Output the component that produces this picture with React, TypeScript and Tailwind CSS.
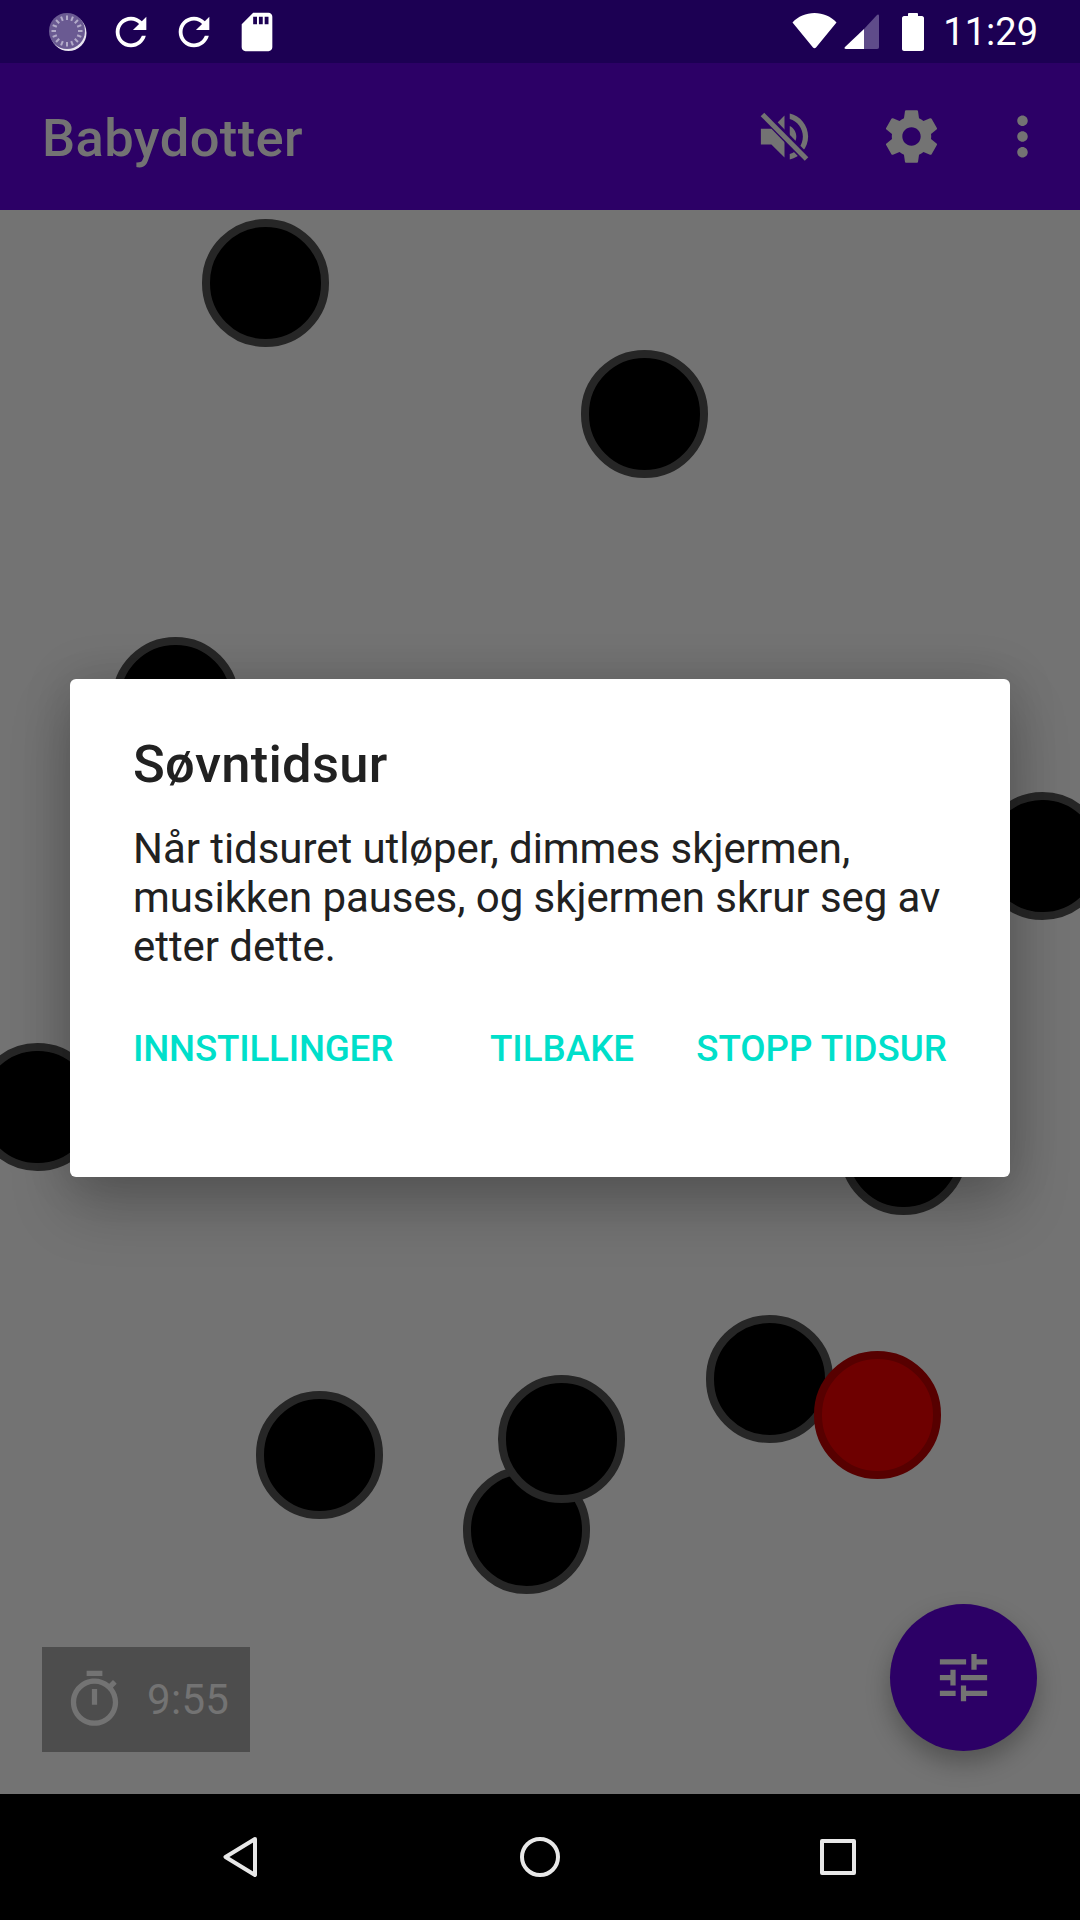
const dots = [
  "left-[202px] top-[9px]",
  "left-[581px] top-[140px]",
  "left-[112px] top-[427px]",
  "left-[979px] top-[582px]",
  "left-[-26px] top-[833px]",
  "left-[840px] top-[877px]",
  "left-[706px] top-[1105px]",
  "left-[256px] top-[1181px]",
  "left-[463px] top-[1256px]",
  "left-[498px] top-[1165px]",
];

function Icon({ d, size, className }: { d: string; size: number; className?: string }) {
  return (
    <svg width={size} height={size} viewBox="0 0 24 24" fill="currentColor" className={className}>
      <path d={d} />
    </svg>
  );
}

const REFRESH =
  "M17.65 6.35C16.2 4.9 14.21 4 12 4c-4.42 0-7.99 3.58-7.99 8s3.57 8 7.99 8c3.73 0 6.84-2.55 7.73-6h-2.08c-.82 2.33-3.04 4-5.65 4-3.31 0-6-2.69-6-6s2.69-6 6-6c1.66 0 3.14.69 4.22 1.78L13 11h7V4l-2.35 2.35z";
const SD =
  "M18 2h-8L4.02 8 4 20c0 1.1.9 2 2 2h12c1.1 0 2-.9 2-2V4c0-1.1-.9-2-2-2zm-6 6h-2V4h2v4zm3 0h-2V4h2v4zm3 0h-2V4h2v4z";
const GEAR =
  "M19.43 12.98c.04-.32.07-.64.07-.98s-.03-.66-.07-.98l2.11-1.65c.19-.15.24-.42.12-.64l-2-3.46c-.12-.22-.39-.3-.61-.22l-2.49 1c-.52-.4-1.08-.73-1.69-.98l-.38-2.65C14.46 2.18 14.25 2 14 2h-4c-.25 0-.46.18-.49.42l-.38 2.65c-.61.25-1.17.59-1.69.98l-2.49-1c-.23-.09-.49 0-.61.22l-2 3.46c-.13.22-.07.49.12.64l2.11 1.65c-.04.32-.07.65-.07.98s.03.66.07.98l-2.11 1.65c-.19.15-.24.42-.12.64l2 3.46c.12.22.39.3.61.22l2.49-1c.52.4 1.08.73 1.69.98l.38 2.65c.03.24.24.42.49.42h4c.25 0 .46-.18.49-.42l.38-2.65c.61-.25 1.17-.59 1.69-.98l2.49 1c.23.09.49 0 .61-.22l2-3.46c.12-.22.07-.49-.12-.64l-2.11-1.65zM12 15.5c-1.93 0-3.5-1.57-3.5-3.5s1.57-3.5 3.5-3.5 3.5 1.57 3.5 3.5-1.57 3.5-3.5 3.5z";
const MORE =
  "M12 8c1.1 0 2-.9 2-2s-.9-2-2-2-2 .9-2 2 .9 2 2 2zm0 2c-1.1 0-2 .9-2 2s.9 2 2 2 2-.9 2-2-.9-2-2-2zm0 6c-1.1 0-2 .9-2 2s.9 2 2 2 2-.9 2-2-.9-2-2-2z";
const TUNE =
  "M3 17v2h6v-2H3zM3 5v2h10V5H3zm10 16v-2h8v-2h-8v-2h-2v6h2zM7 9v2H3v2h4v2h2V9H7zm14 4v-2H11v2h10zm-6-4h2V7h4V5h-4V3h-2v6z";
const TIMER =
  "M15 1H9v2h6V1zm-4 13h2V8h-2v6zm8.03-6.61l1.42-1.42c-.43-.51-.9-.99-1.41-1.41l-1.42 1.42C16.07 4.74 14.12 4 12 4c-4.97 0-9 4.03-9 9s4.02 9 9 9 9-4.03 9-9c0-2.12-.74-4.07-1.97-5.61zM12 20c-3.87 0-7-3.13-7-7s3.13-7 7-7 7 3.13 7 7-3.13 7-7 7z";
const VOLUME =
  "M3 9v6h4l5 5V4L7 9H3zm13.5 3c0-1.77-1.02-3.29-2.5-4.03v8.05c1.48-.73 2.5-2.25 2.5-4.02zM14 3.23v2.06c2.89.86 5 3.54 5 6.71s-2.11 5.85-5 6.71v2.06c4.01-.91 7-4.49 7-8.77s-2.99-7.86-7-8.77z";

function Spinner() {
  const ticks = Array.from({ length: 16 }, (_, i) => (i * 360) / 16);
  return (
    <svg width="46" height="46" viewBox="0 0 46 46">
      <circle cx="23.5" cy="24" r="18" fill="#e8e4f0" />
      <circle cx="22" cy="22" r="18" fill="#6a5a92" />
      {ticks.map((a) => (
        <line
          key={a}
          x1="22"
          y1="6.5"
          x2="22"
          y2="11"
          stroke="#b3abc9"
          strokeWidth="2"
          transform={`rotate(${a} 22 22)`}
        />
      ))}
    </svg>
  );
}

function StatusBar() {
  return (
    <div className="flex h-[63px] items-center justify-between bg-[#1c0053] pl-[45px] pr-[42px] text-white">
      <div className="flex items-center gap-[17px]">
        <Spinner />
        <Icon d={REFRESH} size={46} />
        <Icon d={REFRESH} size={46} />
        <Icon d={SD} size={46} />
      </div>
      <div className="flex items-center">
        <svg width="45" height="36" viewBox="0 0 45 36" className="mt-[-1px]">
          <path d="M0.5 9.5C6 3.5 14 0 22.5 0S39 3.5 44.5 9.5L24 34.5c-.8 1-2.2 1-3 0z" fill="#fff" />
        </svg>
        <svg width="35" height="35" viewBox="0 0 35 35" className="ml-[7px]">
          <path d="M20 15L33 1c1-1 2-.5 2 1v31c0 1-.5 2-2 2H20z" fill="#5f4c8a" />
          <path d="M20 15L1 33c-1 1-.5 2 1 2h18z" fill="#fff" />
        </svg>
        <svg width="22" height="38" viewBox="0 0 22 38" className="ml-[23px]">
          <path d="M6 3V1c0-.5.5-1 1-1h8c.5 0 1 .5 1 1v2h4c1 0 2 1 2 2v31c0 1-1 2-2 2H2c-1 0-2-1-2-2V5c0-1 1-2 2-2z" fill="#fff" />
        </svg>
        <span className="ml-[19px] text-[38px] leading-[44px]">11:29</span>
      </div>
    </div>
  );
}

function AppBar() {
  return (
    <div className="flex h-[147px] items-center justify-between bg-[#2c0066] pl-[42px] pr-[26px] text-[#737373]">
      <h1 className="mt-[3px] text-[52.5px] font-medium leading-[62px] tracking-[0.4px]">Babydotter</h1>
      <div className="flex items-center">
        <svg width="63" height="63" viewBox="0 0 24 24" fill="currentColor">
          <path d={VOLUME} />
          <path d="M4 3.5L20.5 20.5" stroke="#2c0066" strokeWidth="3.4" />
          <path d="M3.6 3.6L20.4 20.6" stroke="currentColor" strokeWidth="1.9" />
        </svg>
        <Icon d={GEAR} size={63} className="ml-[64px]" />
        <Icon d={MORE} size={63} className="ml-[48px]" />
      </div>
    </div>
  );
}

function NavBar() {
  return (
    <div className="flex h-[126px] items-center bg-black pl-[223px] text-[#e8e8e8]">
      <svg width="34" height="40" viewBox="0 0 34 40" fill="none" stroke="currentColor" strokeWidth="4" strokeLinejoin="round">
        <path d="M32 2L2.5 20L32 38z" />
      </svg>
      <svg width="40" height="40" viewBox="0 0 40 40" fill="none" stroke="currentColor" strokeWidth="4" className="ml-[263px]">
        <circle cx="20" cy="20" r="18" />
      </svg>
      <svg width="36" height="36" viewBox="0 0 36 36" fill="none" stroke="currentColor" strokeWidth="4" strokeLinejoin="round" className="ml-[260px]">
        <rect x="2" y="2" width="32" height="32" />
      </svg>
    </div>
  );
}

export default function App() {
  return (
    <div className="relative flex h-[1920px] w-[1080px] flex-col overflow-hidden bg-[#737373] font-[Roboto,sans-serif]">
      <StatusBar />
      <AppBar />

      <main className="relative flex-1">
        {dots.map((pos) => (
          <div key={pos} className={`absolute h-[128px] w-[127px] rounded-full border-[8px] border-[#262626] bg-black ${pos}`} />
        ))}
        <div className="absolute left-[814px] top-[1141px] h-[128px] w-[127px] rounded-full border-[8px] border-[#570000] bg-[#6e0000]" />

        <div className="absolute left-[42px] top-[1437px] flex h-[105px] w-[208px] items-center bg-[#4d4d4d] pl-[21px] text-[#737373]">
          <Icon d={TIMER} size={63} />
          <span className="ml-[21px] text-[42px] leading-[49px] tracking-[0.3px]">9:55</span>
        </div>

        <button className="absolute left-[890px] top-[1394px] flex h-[147px] w-[147px] items-center justify-center rounded-full bg-[#2c0066] text-[#737373] shadow-[0_12px_24px_rgba(0,0,0,0.28)]">
          <Icon d={TUNE} size={63} />
        </button>
      </main>

      <NavBar />

      <div className="absolute left-[70px] top-[679px] h-[498px] w-[940px] rounded-[6px] bg-white px-[63px] pt-[54px] text-[#212121] shadow-[0_30px_60px_rgba(0,0,0,0.22),0_0_50px_rgba(0,0,0,0.14)]">
        <h2 className="text-[52.5px] font-medium leading-[62px] tracking-[0.25px]">Søvntidsur</h2>
        <p className="mt-[29px] text-[42px] leading-[49px] tracking-[-0.06px]">
          Når tidsuret utløper, dimmes skjermen, musikken pauses, og skjermen skrur seg av etter dette.
        </p>
        <div className="mt-[56px] flex text-[36.75px] font-medium leading-[44px] text-[#00dfca]">
          <span className="mr-auto tracking-[-0.2px]">INNSTILLINGER</span>
          <span>TILBAKE</span>
          <span className="ml-[62px]">STOPP TIDSUR</span>
        </div>
      </div>
    </div>
  );
}
